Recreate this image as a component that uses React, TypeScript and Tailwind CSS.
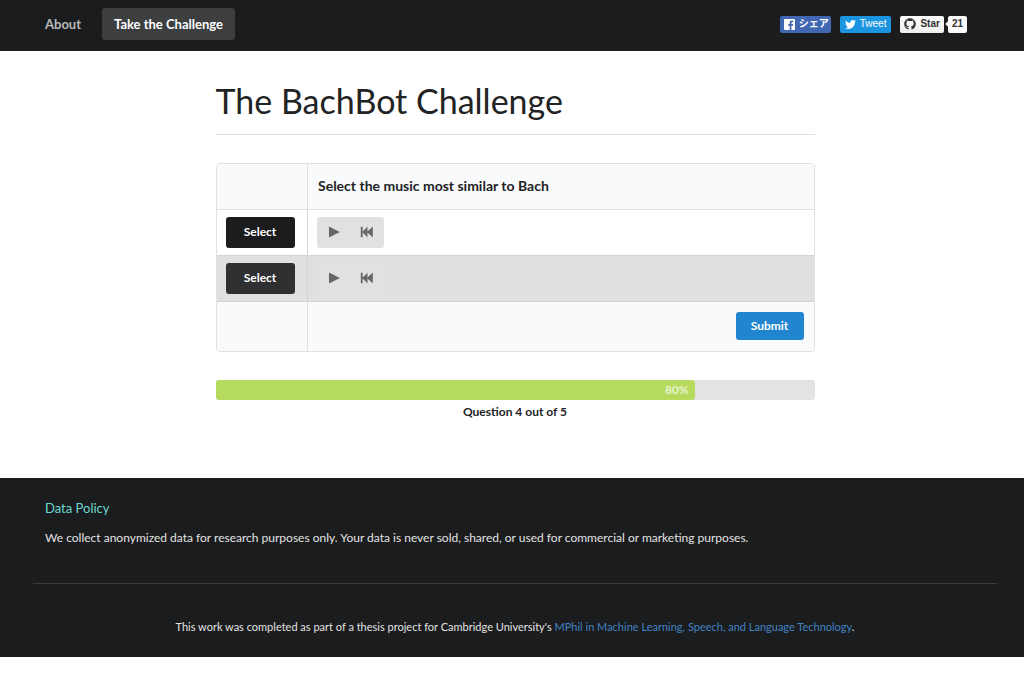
import { useState } from "react";
import { FaTwitter, FaGithub } from "react-icons/fa";

type Track = {
  id: string;
  label: string;
};

const tracks: Track[] = [
  { id: "a", label: "first sample" },
  { id: "b", label: "second sample" },
];

const question = 4;
const total = 5;

const PlayIcon: React.FC = () => (
  <svg viewBox="0 0 12 12" className="h-3 w-3" fill="currentColor" aria-hidden="true">
    <path d="M1 1.2 Q1 .5 1.6 .8 L11.3 5.7 Q11.8 6 11.3 6.3 L1.6 11.2 Q1 11.5 1 10.8Z" />
  </svg>
);

const RewindIcon: React.FC = () => (
  <svg viewBox="0 0 14 12" className="h-3 w-3.5" fill="currentColor" aria-hidden="true">
    <path d="M.8 .7h1.8v4.9L7.5 .8v4.8L12.8 .6v10.8L7.5 6.4v4.8L2.6 6.4v4.9H.8z" />
  </svg>
);

const FacebookIcon: React.FC = () => (
  <svg viewBox="0 0 12 12" className="h-[11px] w-[11px]" aria-hidden="true">
    <rect width="12" height="12" rx="1" fill="#fff" />
    <path
      d="M8.1 12V7.4h1.6l.3-1.9H8.1V4.4c0-.6.3-.9.9-.9h1V1.8c-.3 0-.8-.1-1.4-.1-1.5 0-2.4.9-2.4 2.4v1.4H4.6v1.9h1.6V12z"
      fill="#4267b2"
    />
  </svg>
);

const NavBar: React.FC = () => (
  <nav className="flex h-[51px] items-center justify-between bg-[#1b1c1d] pr-[57px] pb-[3px] pl-[33px]">
    <div className="flex items-center gap-[9px] text-[13px] leading-5 font-bold">
      <a href="#about" className="px-3 py-1.5 text-[#bababb]">
        About
      </a>
      <a
        href="#challenge"
        aria-current="page"
        className="rounded-[3px] bg-[#3d3e3f] px-3 py-1.5 text-white"
      >
        Take the Challenge
      </a>
    </div>
    <div className="flex items-center gap-[9px] text-[10px] leading-4">
      <a
        href="#share"
        className="flex h-[17px] items-center gap-1 rounded-xs bg-[#4267b2] pr-0.5 pl-1 font-['Liberation_Sans','Noto_Sans_CJK_JP',sans-serif] font-bold text-white"
      >
        <FacebookIcon />
        シェア
      </a>
      <a
        href="#tweet"
        className="flex h-[17px] items-center gap-1 rounded-xs bg-[#1b95e0] px-[5px] font-['Liberation_Sans',sans-serif] text-white"
      >
        <FaTwitter className="h-[11px] w-[11px]" />
        Tweet
      </a>
      <div className="flex items-center gap-1 font-['Liberation_Sans',sans-serif] font-bold text-[#333333]">
        <a
          href="#star"
          className="flex h-[17px] items-center gap-1 rounded-xs bg-linear-to-b from-[#fcfcfc] to-[#eeeeee] px-1"
        >
          <FaGithub className="h-3 w-3" />
          Star
        </a>
        <a
          href="#stargazers"
          className="relative flex h-[17px] items-center rounded-xs bg-[#fafafa] px-1"
        >
          <span className="absolute top-1.5 -left-0.5 h-1 w-1 rotate-45 bg-[#fafafa]" />
          21
        </a>
      </div>
    </div>
  </nav>
);

const Challenge: React.FC = () => {
  const [selected, setSelected] = useState("b");
  const percent = (question / total) * 100;

  return (
    <main className="mx-auto w-full max-w-[599px] pt-7 pb-[58px]">
      <h1 className="border-b border-[#e0e0e0] pb-3 text-[34px] leading-[43px]">
        The BachBot Challenge
      </h1>
      <div className="mt-7 overflow-hidden rounded-sm border border-[#e0e1e2]">
        <table className="w-full border-collapse text-xs">
          <thead className="bg-[#f9fafb]">
            <tr className="h-[45px]">
              <td className="w-[91px] border-r border-b border-[#e0e1e2]" />
              <th className="border-b border-[#e0e1e2] px-2.5 text-left text-sm font-bold">
                Select the music most similar to Bach
              </th>
            </tr>
          </thead>
          <tbody>
            {tracks.map((track) => {
              const active = track.id === selected;
              return (
                <tr
                  key={track.id}
                  className={active ? "bg-[#e0e0e0]" : "bg-white"}
                >
                  <td className="border-r border-b border-[#d4d4d5] px-[9px] py-[7px]">
                    <button
                      type="button"
                      aria-label={`Select ${track.label}`}
                      onClick={() => setSelected(track.id)}
                      className={`block h-[31px] w-[69px] rounded-[3px] font-bold text-white ${
                        active ? "bg-[#2f3032]" : "bg-[#1b1c1d]"
                      }`}
                    >
                      Select
                    </button>
                  </td>
                  <td className="border-b border-[#d4d4d5] px-[9px] py-[7px]">
                    <div className="flex h-[31px] w-[67px] rounded-[3px] bg-[#e0e1e2] text-[#666666]">
                      <button
                        type="button"
                        aria-label={`Play ${track.label}`}
                        className="flex flex-1 items-center justify-center"
                      >
                        <PlayIcon />
                      </button>
                      <button
                        type="button"
                        aria-label={`Restart ${track.label}`}
                        className="flex flex-1 items-center justify-center"
                      >
                        <RewindIcon />
                      </button>
                    </div>
                  </td>
                </tr>
              );
            })}
          </tbody>
          <tfoot className="bg-[#f9fafb]">
            <tr className="h-[50px]">
              <td className="border-r border-[#e0e1e2]" />
              <td className="px-2.5 text-right">
                <button
                  type="button"
                  className="h-7 w-[68px] rounded-[3px] bg-[#2185d0] font-bold text-white"
                >
                  Submit
                </button>
              </td>
            </tr>
          </tfoot>
        </table>
      </div>
      <div
        role="progressbar"
        aria-label="Progress"
        aria-valuenow={percent}
        className="mt-7 rounded-[3px] bg-[#e3e3e3]"
      >
        <div
          className="h-5 rounded-[3px] bg-[#b5da5e] pr-1.5 text-right text-xs leading-5 font-bold text-[#e9f4cf]"
          style={{ width: `${percent}%` }}
        >
          {percent}%
        </div>
      </div>
      <p className="mt-1 text-center text-xs leading-4 font-bold">
        Question {question} out of {total}
      </p>
    </main>
  );
};

const Footer: React.FC = () => (
  <footer className="bg-[#1b1c1d] py-5 pr-[27px] pl-[33px] text-[#e3e3e3]">
    <div className="px-3">
      <h4 className="text-[13px] leading-5 text-[#6dd9d4]">Data Policy</h4>
      <p className="mt-2.5 text-xs leading-5">
        We collect anonymized data for research purposes only. Your data is
        never sold, shared, or used for commercial or marketing purposes.
      </p>
    </div>
    <div className="mt-[35px] border-t border-[#3a3b3c] pt-[33px] text-center text-[11px] leading-5">
      This work was completed as part of a thesis project for Cambridge
      University's{" "}
      <a href="#mlsalt" className="text-[#4183c4]">
        MPhil in Machine Learning, Speech, and Language Technology
      </a>
      .
    </div>
  </footer>
);

export default function App() {
  return (
    <div className="min-h-screen bg-white font-['Lato',sans-serif] text-[#222324]">
      <NavBar />
      <div className="pr-[27px] pl-[33px]">
        <Challenge />
      </div>
      <Footer />
    </div>
  );
}
